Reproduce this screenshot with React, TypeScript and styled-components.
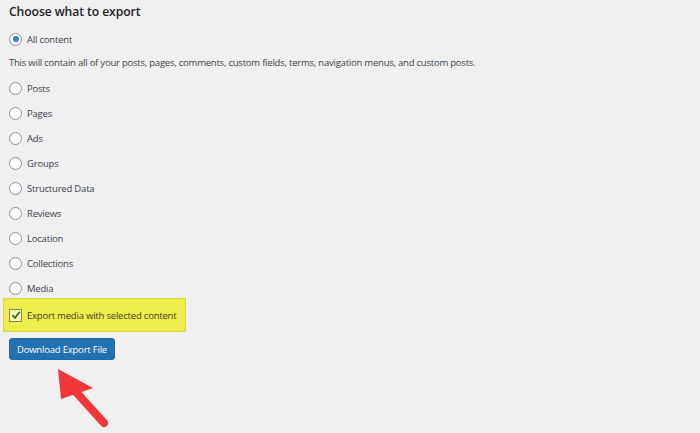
import React from 'react';
import styled, { createGlobalStyle } from 'styled-components';

const GlobalStyle = createGlobalStyle`
  html, body {
    margin: 0;
    padding: 0;
    background: #f0f0f1;
  }
  body {
    font-family: "Open Sans", "Noto Sans", sans-serif;
    color: #3c434a;
  }
`;

const options = [
  'Posts',
  'Pages',
  'Ads',
  'Groups',
  'Structured Data',
  'Reviews',
  'Location',
  'Collections',
  'Media'
];

const Page = styled.div`
  position: relative;
  width: 700px;
  height: 433px;
  padding-left: 9px;
  box-sizing: border-box;
  overflow: hidden;
`;

const Heading = styled.h2`
  margin: 0;
  height: 24px;
  line-height: 24px;
  font-size: 12.2px;
  font-weight: 600;
  color: #1d2327;
  letter-spacing: -0.1px;
`;

const Row = styled.label<{ $top?: number }>`
  display: flex;
  align-items: center;
  gap: 5px;
  height: 20px;
  margin-top: ${p => p.$top ?? 0}px;
  font-size: 9.5px;
  letter-spacing: -0.2px;
`;

const Radio = styled.span<{ $checked?: boolean }>`
  width: 11px;
  height: 11px;
  border-radius: 50%;
  border: 1px solid #8c8f94;
  background: #fff;
  display: flex;
  align-items: center;
  justify-content: center;

  &::after {
    content: '';
    display: ${p => (p.$checked ? 'block' : 'none')};
    width: 6px;
    height: 6px;
    border-radius: 50%;
    background: #3582c4;
  }
`;

const Description = styled.p`
  margin: 4px 0 0;
  height: 20px;
  line-height: 20px;
  font-size: 9.5px;
  letter-spacing: -0.22px;
`;

const OptionList = styled.div`
  display: flex;
  flex-direction: column;
  gap: 5px;
  margin-top: 5px;
`;

const Highlight = styled.div`
  display: flex;
  align-items: center;
  gap: 5px;
  box-sizing: border-box;
  width: 183px;
  height: 34px;
  margin-left: -6px;
  padding-left: 5px;
  background: #eded4c;
  border: 1px solid #d9d93a;
  font-size: 9.5px;
  letter-spacing: -0.2px;
  color: #3f3f24;
`;

const Checkbox = styled.span`
  width: 11px;
  height: 11px;
  border: 1px solid #8a8a4a;
  background: #f6f6b8;
  display: flex;
  align-items: center;
  justify-content: center;
`;

const Button = styled.button`
  display: block;
  margin-top: 6px;
  width: 106px;
  height: 22px;
  padding: 0;
  border: 1px solid #1f6aa5;
  border-radius: 3px;
  background: #2271b1;
  color: #fff;
  font-family: "Open Sans", "Noto Sans", sans-serif;
  font-size: 9.5px;
  letter-spacing: -0.2px;
`;

const Arrow = styled.svg`
  position: absolute;
  left: 50px;
  top: 362px;
`;

export default function App() {
  return (
    <>
      <GlobalStyle />
      <Page>
        <Heading>Choose what to export</Heading>
        <Row $top={5}>
          <Radio $checked />
          All content
        </Row>
        <Description>
          This will contain all of your posts, pages, comments, custom fields, terms, navigation menus, and custom posts.
        </Description>
        <OptionList>
          {options.map(o => (
            <Row key={o}>
              <Radio />
              {o}
            </Row>
          ))}
        </OptionList>
        <Highlight>
          <Checkbox>
            <svg width="10" height="10" viewBox="0 0 10 10">
              <path d="M1.5 5.2 L4 7.8 L8.8 1.8" fill="none" stroke="#3b6a1e" strokeWidth="1.8" />
            </svg>
          </Checkbox>
          Export media with selected content
        </Highlight>
        <Button>Download Export File</Button>
        <Arrow width="64" height="68" viewBox="0 0 64 68">
          <polygon points="8,7 11,37 43,26" fill="#f2373a" />
          <line x1="26" y1="30" x2="54" y2="61" stroke="#f2373a" strokeWidth="8" strokeLinecap="round" />
        </Arrow>
      </Page>
    </>
  );
}
